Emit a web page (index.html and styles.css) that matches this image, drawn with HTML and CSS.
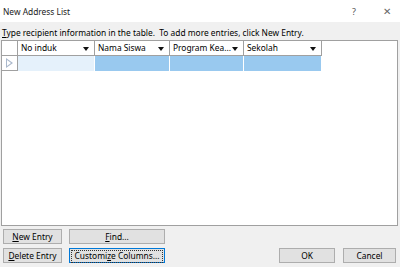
FILE: index.html
```html
<!DOCTYPE html>
<html lang="en">
<head>
    <meta charset="UTF-8">
    <title>New Address List</title>
    <link rel="stylesheet" href="styles.css">
</head>
<body>
    <div class="dialog">
        <div class="titlebar">
            <span class="title">New Address List</span>
            <span class="help">?</span>
            <span class="close">&#x2715;</span>
        </div>

        <p class="hint"><u>T</u>ype recipient information in the table.&nbsp; To add more entries, click New Entry.</p>

        <div class="grid">
            <div class="grid-row header">
                <div class="cell corner"></div>
                <div class="cell col1">No induk<span class="arrow"></span></div>
                <div class="cell col2">Nama Siswa<span class="arrow"></span></div>
                <div class="cell col3">Program Kea...<span class="arrow"></span></div>
                <div class="cell col4">Sekolah<span class="arrow"></span></div>
            </div>
            <div class="grid-row data">
                <div class="cell corner"><span class="pointer"></span></div>
                <div class="cell col1 current"></div>
                <div class="cell col2 selected"></div>
                <div class="cell col3 selected"></div>
                <div class="cell col4 selected"></div>
            </div>
        </div>

        <div class="footer">
            <div class="left-buttons">
                <button class="btn small"><u>N</u>ew Entry</button>
                <button class="btn wide"><u>F</u>ind...</button>
                <button class="btn small"><u>D</u>elete Entry</button>
                <button class="btn wide focused"><span class="focus-ring">Customi<u>z</u>e Columns...</span></button>
            </div>
            <div class="right-buttons">
                <button class="btn ok">OK</button>
                <button class="btn cancel">Cancel</button>
            </div>
        </div>
    </div>
</body>
</html>
```

FILE: styles.css
```css
body {
    margin: 0;
    font-family: "Noto Sans", Arial, sans-serif;
    font-size: 8.4px;
    color: #000;
    background-color: #f0f0f0;
}
.dialog {
    width: 400px;
    height: 267px;
    display: flex;
    flex-direction: column;
}
.titlebar {
    height: 22px;
    background-color: #fff;
    display: flex;
    align-items: center;
    padding-left: 3px;
}
.title {
    flex: 1;
    color: #222;
}
.help {
    width: 10px;
    margin-right: 21px;
    color: #555;
    font-size: 9px;
}
.close {
    width: 10px;
    margin-right: 7px;
    color: #666;
    font-size: 10px;
}
.hint {
    margin: 5px 0 0 2px;
    height: 13px;
    line-height: 12px;
    white-space: nowrap;
}
.grid {
    margin: 0 2px 0 1px;
    height: 184px;
    border: 1px solid #a0a0a0;
    background-color: #fff;
}
.grid-row {
    display: flex;
    height: 15px;
}
.cell {
    box-sizing: border-box;
    height: 15px;
    border-right: 1px solid #a0a0a0;
    border-bottom: 1px solid #a0a0a0;
    position: relative;
    line-height: 13px;
    padding-left: 3px;
    white-space: nowrap;
}
.corner {
    width: 16px;
}
.col1 { width: 77px; }
.col2 { width: 75px; }
.col3 { width: 74px; }
.col4 { width: 78px; }
.arrow {
    position: absolute;
    right: 5px;
    top: 6px;
    border-left: 3.5px solid transparent;
    border-right: 3.5px solid transparent;
    border-top: 4px solid #111;
}
.data .cell {
    border-right: 1px solid #fff;
    border-bottom: none;
    height: 15px;
}
.data .corner {
    border-right: 1px solid #a0a0a0;
    border-bottom: 1px solid #a0a0a0;
}
.pointer {
    position: absolute;
    left: 4px;
    top: 2px;
    width: 7px;
    height: 10px;
}
.pointer::before {
    content: "";
    position: absolute;
    left: 0;
    top: 0;
    border-top: 5px solid transparent;
    border-bottom: 5px solid transparent;
    border-left: 7px solid #aab8cc;
}
.pointer::after {
    content: "";
    position: absolute;
    left: 1px;
    top: 2px;
    border-top: 3px solid transparent;
    border-bottom: 3px solid transparent;
    border-left: 4px solid #fff;
}
.current {
    background-color: #e5f1fb;
}
.selected {
    background-color: #99c9ef;
}
.footer {
    display: flex;
    justify-content: space-between;
    align-items: flex-end;
    padding: 3px 4px 4px 3px;
}
.left-buttons {
    display: grid;
    grid-template-columns: 59px 96px;
    column-gap: 7px;
    row-gap: 4px;
}
.right-buttons {
    display: flex;
    gap: 8px;
}
.btn {
    box-sizing: border-box;
    height: 15px;
    padding: 0;
    margin: 0;
    font-family: inherit;
    font-size: 8.4px;
    color: #000;
    background-color: #e1e1e1;
    border: 1px solid #adadad;
    line-height: 12px;
    white-space: nowrap;
}
.btn.focused {
    border-color: #0078d7;
    padding: 1px;
}
.focus-ring {
    display: block;
    height: 11px;
    line-height: 10px;
    border: 1px dotted #333;
}
.ok { width: 56px; }
.cancel { width: 53px; }
```
